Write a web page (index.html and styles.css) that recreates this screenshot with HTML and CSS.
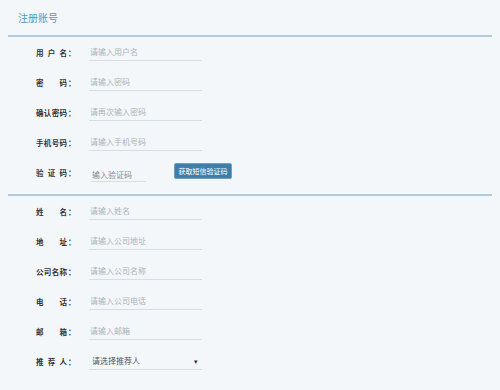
FILE: index.html
```html
<!DOCTYPE html>
<html>
<head>
  <meta charset="utf-8">
  <title>注册账号</title>
  <link rel="stylesheet" href="styles.css">
</head>
<body>
  <div class="page">
    <div class="header">
      <h2>注册账号</h2>
    </div>

    <div class="section">
      <div class="row">
        <label class="label"><span class="name">用户名</span>：</label>
        <input class="field" type="text" placeholder="请输入用户名">
      </div>
      <div class="row">
        <label class="label"><span class="name">密码</span>：</label>
        <input class="field" type="password" placeholder="请输入密码">
      </div>
      <div class="row">
        <label class="label"><span class="name">确认密码</span>：</label>
        <input class="field" type="password" placeholder="请再次输入密码">
      </div>
      <div class="row">
        <label class="label"><span class="name">手机号码</span>：</label>
        <input class="field" type="text" placeholder="请输入手机号码">
      </div>
      <div class="row">
        <label class="label"><span class="name">验证码</span>：</label>
        <input class="field code" type="text" placeholder="输入验证码">
        <button class="btn">获取短信验证码</button>
      </div>
    </div>

    <div class="section second">
      <div class="row">
        <label class="label"><span class="name">姓名</span>：</label>
        <input class="field" type="text" placeholder="请输入姓名">
      </div>
      <div class="row">
        <label class="label"><span class="name">地址</span>：</label>
        <input class="field" type="text" placeholder="请输入公司地址">
      </div>
      <div class="row">
        <label class="label"><span class="name">公司名称</span>：</label>
        <input class="field" type="text" placeholder="请输入公司名称">
      </div>
      <div class="row">
        <label class="label"><span class="name">电话</span>：</label>
        <input class="field" type="text" placeholder="请输入公司电话">
      </div>
      <div class="row">
        <label class="label"><span class="name">邮箱</span>：</label>
        <input class="field" type="text" placeholder="请输入邮箱">
      </div>
      <div class="row">
        <label class="label"><span class="name">推荐人</span>：</label>
        <div class="select">
          <span>请选择推荐人</span>
          <span class="arrow">▾</span>
        </div>
      </div>
    </div>
  </div>
</body>
</html>
```

FILE: styles.css
```css
/* 注册页面样式 */
body {
  margin: 0;
  background-color: #f3f7fa;
  font-family: "Noto Sans CJK SC", "Liberation Sans", sans-serif;
}

.page {
  width: 500px;
  height: 390px;
  overflow: hidden;
}

.header {
  height: 35px;
  margin: 0 8px;
  border-bottom: 2px solid #b0cbdc;
  display: flex;
  align-items: center;
}

.header h2 {
  margin: 0 0 0 10px;
  font-size: 10px;
  font-weight: normal;
  color: #5797c4;
}

.section {
  margin: 0 8px;
  padding-bottom: 7px;
  border-bottom: 2px solid #b0cbdc;
}

.section.second {
  border-bottom: none;
}

.row {
  height: 30px;
  display: flex;
  align-items: center;
}

.label {
  width: 66px;
  flex-shrink: 0;
  padding-left: 28px;
  display: flex;
  white-space: nowrap;
  font-size: 7.5px;
  font-weight: bold;
  color: #333;
  box-sizing: border-box;
}

.label .name {
  width: 31px;
  flex-shrink: 0;
  text-align: justify;
  text-align-last: justify;
  margin-right: 1px;
}

.field {
  margin-left: 15px;
  width: 113px;
  height: 18px;
  padding: 0 1px;
  border: none;
  border-bottom: 1px solid #d8dde2;
  background: transparent;
  font-family: inherit;
  font-size: 8px;
  outline: none;
  box-sizing: border-box;
}

.field::placeholder {
  color: #aeb2b6;
}

.field.code {
  margin-left: 17px;
  width: 55px;
  height: 14px;
  margin-top: 6px;
}

.field.code::placeholder {
  color: #888;
}

.btn {
  margin-left: 28px;
  margin-bottom: 2px;
  width: 58px;
  height: 16px;
  padding: 0;
  background-color: #3e7ea9;
  color: #fff;
  border: 1px solid #6fa0c2;
  border-radius: 2px;
  font-family: inherit;
  font-size: 7px;
  cursor: pointer;
}

.select {
  margin-left: 15px;
  width: 113px;
  height: 18px;
  padding: 0 4px 0 3px;
  border-bottom: 1px solid #d8dde2;
  display: flex;
  align-items: center;
  justify-content: space-between;
  font-size: 8px;
  color: #555;
  box-sizing: border-box;
}

.select .arrow {
  font-size: 7px;
  color: #333;
}
```
